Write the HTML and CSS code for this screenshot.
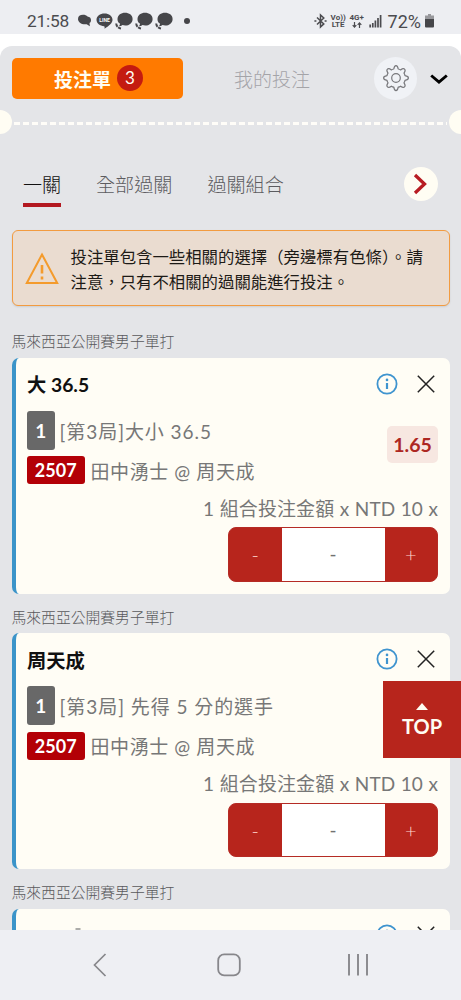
FILE: index.html
```html
<!DOCTYPE html>
<html lang="zh-Hant">
<head>
<meta charset="utf-8">
<meta name="viewport" content="width=device-width, initial-scale=1">
<title>投注單</title>
<link rel="stylesheet" href="styles.css">
</head>
<body>
<svg width="0" height="0" class="sprite">
  <symbol id="info" viewBox="0 0 22 22"><circle cx="11" cy="11" r="9.600" fill="none" stroke="#3f94cf" stroke-width="1.800"/><path d="M11 10v6" stroke="#3f94cf" stroke-width="2.200"/><circle cx="11" cy="6.900" r="1.300" fill="#3f94cf"/></symbol>
  <symbol id="close" viewBox="0 0 18 18"><path d="M.8 .8l16.400 16.400M17.200 .8L.8 17.200" fill="none" stroke="#222" stroke-width="1.500"/></symbol>
  <symbol id="chat" viewBox="0 0 18 18"><path d="M2.500 7C2.800 3 6 .8 10 .8s7.600 2.200 7.600 6.200-3.300 6.600-7.300 6.600c-1 0-2-.2-2.800-.5-1.200 1-2.500 1.200-3.600 1.100.8-.7 1.100-1.500 1-2.600C3 10.400 2.400 8.800 2.500 7z" fill="#46464a"/><path d="M1.200 11.500c.2 2.600 2 4.500 4.800 5" fill="none" stroke="#46464a" stroke-width="2" stroke-dasharray="3.500 .8"/></symbol>
</svg>
<div class="phone">
  <header class="status">
    <span class="clock">21:58</span>
    <svg class="bubble" width="15" height="14" viewBox="0 0 15 14"><path d="M1 5c0-2.800 2-4.200 5-4.200 2 0 3.500.5 4.500 1.600 2.200.3 3.500 1.500 3.500 3.500 0 1.500-.5 2.500-1.500 3.200l.4 3.100-3.200-2C5 11 1 8.500 1 5z" fill="#46464a"/></svg>
    <svg class="line" width="17" height="16" viewBox="0 0 17 16"><path d="M8.500.5c4.500 0 8 2.700 8 6.200 0 3.200-3 5.700-8 9 .2-1.300.2-2-.3-2.500C3.700 12.700.5 10.200.5 6.700.5 3.200 4 .5 8.500.5z" fill="#46464a"/><text x="8.500" y="8.800" text-anchor="middle" font-size="5" font-weight="700" fill="#fff">LINE</text></svg>
    <svg width="18" height="18"><use href="#chat"/></svg>
    <svg width="18" height="18"><use href="#chat"/></svg>
    <svg width="18" height="18"><use href="#chat"/></svg>
    <i class="dot"></i>
    <div class="signals">
      <svg width="13" height="16" viewBox="0 0 13 16"><path d="M3 4.500l6.800 6.400L6.500 14V2l3.300 3L3 11.500" fill="none" stroke="#4b4b4f" stroke-width="1.500"/><path d="M.4 8h2M10.600 8h2" stroke="#4b4b4f" stroke-width="1.700"/></svg>
      <span class="volte">Vo))<br>LTE</span>
      <span class="lte">4G+<svg width="10" height="6" viewBox="0 0 10 6"><path d="M2.500 0v5M.7 3.200l1.800 1.900 1.800-1.900M7.500 6V1M5.700 2.800L7.500.9l1.800 1.900" fill="none" stroke="#4b4b4f" stroke-width="1.200"/></svg></span>
      <svg class="bars" width="13" height="14" viewBox="0 0 13 14"><path d="M1.200 13.500v-3M3.800 13.500V9M6.400 13.500V6.500M9 13.500V4M11.600 13.500V1" stroke="#4b4b4f" stroke-width="1.700"/></svg>
      <span class="percent">72%</span>
      <svg width="9" height="14" viewBox="0 0 9 14"><path d="M3 0h3v1.500h3V5H0V1.500h3z" fill="#98989c"/><path d="M0 5h9v7.500q0 1-1 1H1q-1 0-1-1z" fill="#46464a"/></svg>
    </div>
  </header>
  <main class="sheet">
    <div class="top">
      <button class="slip">投注單<b class="count">3</b></button>
      <span class="mine">我的投注</span>
      <span class="gear"><svg width="28" height="28" viewBox="0 0 28 28" fill="none" stroke="#77777b" stroke-width="1.200" stroke-linejoin="round"><path d="M11.800 5Q12.300 1.600 14 1.600t2.200 3.400q1.400.3 2.400.9 2.700-2 4-.7t-.6 4q.7 1 1 2.500 3.400.5 3.400 2.300t-3.400 2.300q-.3 1.400-1 2.500 1.900 2.700.6 4t-4-.6q-1 .7-2.400 1-.5 3.400-2.200 3.400t-2.200-3.400q-1.400-.3-2.400-1-2.700 1.900-4 .6t.6-4q-.7-1.100-1-2.500-3.400-.5-3.400-2.300t3.400-2.300q.3-1.500 1-2.500-1.900-2.700-.6-4t4 .7q1-.6 2.400-.9z"/><circle cx="14" cy="14" r="4.300"/></svg></span>
      <svg class="chev" width="18" height="11" viewBox="0 0 18 11"><path d="M1.200 1.500L9 8.200l7.800-6.700" fill="none" stroke="#000" stroke-width="2.900"/></svg>
    </div>
    <div class="tear"><i></i></div>
    <nav class="tabs"><span class="active">一關</span><span>全部過關</span><span>過關組合</span><svg width="34" height="34" viewBox="0 0 34 34"><circle cx="17" cy="17" r="17" fill="#fffdf3"/><path d="M11 8l9.500 9L11 26" fill="none" stroke="#b81c22" stroke-width="3.300"/></svg></nav>
    <div class="notice">
      <svg width="34" height="33" viewBox="0 0 34 33"><path d="M17 2.500L32.200 31H1.800z" fill="none" stroke="#f49b2c" stroke-width="2"/><path d="M17 13v8.500M17 24.500v3" stroke="#f49b2c" stroke-width="2.600"/></svg>
      <p>投注單包含一些相關的選擇（旁邊標有色條）。請<br>注意，只有不相關的過關能進行投注。</p>
    </div>
    <section class="bet">
      <h2>馬來西亞公開賽男子單打</h2>
      <article class="card">
        <div class="title"><h3>大 36.5</h3><svg width="22" height="22"><use href="#info"/></svg><svg width="18" height="18"><use href="#close"/></svg></div>
        <div class="detail"><div>
          <div class="market"><b class="num">1</b><span>[第3局]大小 36.5</span></div>
          <div class="match"><b class="code">2507</b><span>田中湧士 @ 周天成</span></div>
        </div><b class="odds">1.65</b></div>
        <div class="stake">1 組合投注金額 x NTD 10 x</div>
        <div class="stepper"><button>-</button><span>-</span><button>+</button></div>
      </article>
    </section>
    <section class="bet">
      <h2>馬來西亞公開賽男子單打</h2>
      <article class="card">
        <div class="title"><h3>周天成</h3><svg width="22" height="22"><use href="#info"/></svg><svg width="18" height="18"><use href="#close"/></svg></div>
        <div class="detail"><div>
          <div class="market"><b class="num">1</b><span>[第3局] 先得 5 分的選手</span></div>
          <div class="match"><b class="code">2507</b><span>田中湧士 @ 周天成</span></div>
        </div></div>
        <div class="stake">1 組合投注金額 x NTD 10 x</div>
        <div class="stepper"><button>-</button><span>-</span><button>+</button></div>
      </article>
    </section>
    <section class="bet">
      <h2>馬來西亞公開賽男子單打</h2>
      <article class="card">
        <div class="title"><svg class="mark" width="6" height="16" viewBox="0 0 6 16"><path d="M.5 2h5" fill="none" stroke="#888" stroke-width="1.400"/></svg><svg width="22" height="22"><use href="#info"/></svg><svg width="18" height="18"><use href="#close"/></svg></div>
      </article>
    </section>
  </main>
  <a class="totop"><svg width="12" height="7" viewBox="0 0 12 7"><path d="M6 0l6 7H0z" fill="#fffdf3"/></svg>TOP</a>
  <footer class="nav">
    <svg width="14" height="24" viewBox="0 0 14 24"><path d="M12.500 1L1.500 12l11 11" fill="none" stroke="#87878b" stroke-width="1.700"/></svg>
    <svg class="home" width="24" height="24" viewBox="0 0 24 24"><rect x="1.200" y="1.400" width="21.600" height="21" rx="6" fill="none" stroke="#87878b" stroke-width="1.800"/></svg>
    <svg width="24" height="24" viewBox="0 0 24 24"><path d="M3 1v21.500M12 1v21.500M21 1v21.500" stroke="#87878b" stroke-width="1.900"/></svg>
  </footer>
</div>
</body>
</html>
```

FILE: styles.css
```css
* { box-sizing: border-box; }
body { margin: 0; font-family: Lato, "Noto Sans CJK TC", sans-serif; }
svg { display: block; flex: none; }
.sprite { position: absolute; }
h2, h3, p { margin: 0; font-weight: 400; }
button { border: 0; padding: 0; font-family: inherit; }
.phone { position: relative; width: 461px; height: 1000px; overflow: hidden; background: #fff; display: flex; flex-direction: column; }
.status { flex: none; height: 34px; margin-bottom: 12px; background: #edeef2; display: flex; align-items: center; padding: 8px 27px 0; color: #4b4b4f; font-family: Roboto, sans-serif; }
.clock { width: 50px; font-size: 17.300px; letter-spacing: -.2px; }
.status > svg { margin-right: 2px; }
.status > .bubble { margin-right: 4px; }
.dot { width: 6px; height: 6px; border-radius: 50%; background: #46464a; margin-left: 9px; }
.signals { margin-left: auto; display: flex; align-items: center; }
.volte, .lte { font-size: 8px; line-height: 7px; font-weight: 700; text-align: center; }
.volte { margin-left: 4px; width: 15px; }
.lte { margin-left: 3px; width: 16px; }
.lte svg { margin: 1px auto 0; }
.bars { margin-left: 4px; }
.percent { font-size: 18px; margin: 0 4px 0 6px; }
.sheet { flex: 1; min-height: 0; overflow: hidden; background: #e4e5e8; border-radius: 12px 12px 0 0; }
.top { height: 64px; display: flex; align-items: center; padding: 0 12px 0 11.500px; }
.slip { width: 171px; height: 41px; border-radius: 5px; background: #ff7a00; color: #fffdf3; font-size: 19px; font-weight: 700; display: flex; align-items: center; justify-content: center; gap: 6px; padding-left: 3px; }
.count { width: 26px; height: 26px; border-radius: 50%; background: #c41b10; font-size: 17px; line-height: 26px; font-weight: 400; text-align: center; }
.mine { margin-left: 51.500px; font-size: 19px; font-weight: 300; color: #a4a4a8; }
.gear { margin-left: auto; width: 43px; height: 43px; border-radius: 50%; background: #f0f2f6; display: grid; place-items: center; }
.chev { margin: 3px 1px 0 13px; }
.tear { height: 24px; display: flex; align-items: center; justify-content: space-between; margin: 0 -12px; }
.tear::before, .tear::after { content: ""; width: 24px; height: 24px; border-radius: 50%; background: #fffdf3; flex: none; }
.tear i { flex: 1; height: 3px; margin: 2px 2px 0; background: repeating-linear-gradient(90deg, #fffdf8 0 6px, transparent 6px 9px); }
.tabs { height: 96px; display: flex; align-items: center; padding: 4px 23px 0; gap: 35px; font-size: 19.100px; line-height: 45px; font-weight: 300; color: #5c5c60; }
.tabs .active { width: 38px; white-space: nowrap; color: #111; background: linear-gradient(#b31820, #b31820) 0 41px / 38px 4px no-repeat; }
.tabs svg { margin-left: auto; }
.notice { height: 76px; margin: 0 11.500px; border: 1.500px solid #f29b40; border-radius: 6px; background: #eadcd0; box-shadow: 0 1px 2px rgba(0,0,0,.1); display: flex; align-items: center; padding-left: 12px; }
.notice p { margin-left: 12px; padding-top: 2px; font-size: 16.400px; line-height: 25px; color: #1d1a16; white-space: nowrap; }
.bet { height: 275.500px; margin: 0 11.500px; }
.notice + .bet { margin-top: 12px; }
.bet h2 { height: 39.500px; padding-top: 7px; font-size: 14.800px; line-height: 33px; color: #59595c; font-weight: 300; }
.card { height: 236px; border-left: 4px solid #3b94c9; border-radius: 7px; background: #fffdf5; padding: 0 11.500px; }
.title { height: 52px; display: flex; align-items: center; }
.title h3 { margin-right: auto; padding-top: 1px; font-size: 19.300px; font-weight: 700; color: #101010; }
.title svg + svg { margin: 0 3px 0 19px; }
.title .mark { margin: 0 auto 0 48px; }
.title .mark + svg { margin: 0; }
.detail { height: 74px; padding-top: 1px; display: flex; justify-content: space-between; }
.market, .match { display: flex; align-items: center; font-size: 19px; font-weight: 400; color: #777; letter-spacing: .6px; }
.market { height: 39px; gap: 5px; letter-spacing: .95px; }
.match { height: 28px; margin-top: 6.500px; gap: 6px; }
.market b, .match b { letter-spacing: 0; }
.num { width: 27.500px; height: 39px; border-radius: 3px; background: #686868; color: #fff; font-size: 19px; line-height: 40px; text-align: center; }
.code { width: 57.500px; height: 28px; border-radius: 3px; background: #b30006; color: #fff; font-size: 18px; line-height: 28px; text-align: center; }
.odds { width: 51px; height: 37px; margin-top: 15px; border-radius: 5px; background: #f7e7e1; color: #ad2722; font-size: 19.500px; line-height: 37px; text-align: center; }
.stake { height: 43.500px; font-size: 19px; line-height: 50px; text-align: right; color: #777; white-space: nowrap; letter-spacing: .1px; word-spacing: .5px; }
.stepper { width: 210px; height: 54.500px; margin-left: auto; display: flex; background: #b7251c; border: 1px solid #b52b25; border-radius: 8px; overflow: hidden; }
.stepper button { width: 52.500px; background: none; color: #ffd5cc; font-size: 20px; font-weight: 300; }
.stepper span { flex: 1; background: #fff; color: #717171; font-size: 19px; line-height: 52px; text-align: center; }
.totop { position: absolute; right: 0; top: 681px; width: 78px; height: 77px; background: #b7251c; color: #fffdf3; display: flex; flex-direction: column; align-items: center; padding-top: 22px; gap: 4px; font-size: 20px; line-height: 24px; font-weight: 700; }
.nav { flex: none; height: 70px; background: #eeeff3; display: flex; align-items: center; justify-content: space-between; padding: 0 91px 1px 93px; }
.nav .home { margin-left: 4px; }
```
